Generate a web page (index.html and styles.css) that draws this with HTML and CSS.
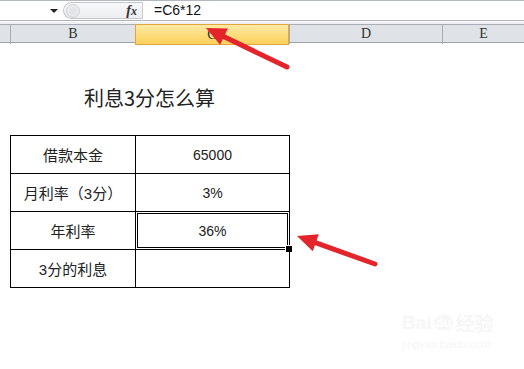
FILE: index.html
```html
<!DOCTYPE html>
<html lang="zh-CN">
<head>
<meta charset="utf-8">
<title>利息3分怎么算</title>
<link rel="stylesheet" href="styles.css">
</head>
<body>
<div class="app">
  <div class="formula-bar">
    <div class="name-box"><span class="dropdown"></span></div>
    <div class="fx-zone">
      <span class="splitter"><span class="dot"></span></span>
      <span class="fx">f<span class="fx-x">x</span></span>
    </div>
    <div class="formula-input">=C6*12</div>
  </div>
  <div class="strip"></div>
  <div class="col-headers">
    <div class="col-h corner"></div>
    <div class="col-h">B</div>
    <div class="col-h active">C</div>
    <div class="col-h">D</div>
    <div class="col-h">E</div>
  </div>
  <div class="sheet">
    <div class="title-wrap"><div class="title">利息3分怎么算</div></div>
    <div class="grid">
      <div class="cell">借款本金</div>
      <div class="cell num">65000</div>
      <div class="cell">月利率（3分）</div>
      <div class="cell num">3%</div>
      <div class="cell">年利率</div>
      <div class="cell num selected">36%<span class="fill-handle"></span></div>
      <div class="cell">3分的利息</div>
      <div class="cell num"></div>
    </div>
    <div class="watermark">
      <div class="wm-logo"><span>Bai</span><span class="wm-du">du</span><span>经验</span></div>
      <div class="wm-url">jingyan.baidu.com</div>
    </div>
  </div>
  <svg class="arrows" width="524" height="369" viewBox="0 0 524 369">
    <line x1="287" y1="67" x2="222" y2="35.8" stroke="#e3242b" stroke-width="5" stroke-linecap="round"/>
    <polygon points="206,28 220.1,44.8 227.9,28.6" fill="#e3242b"/>
    <line x1="375" y1="264" x2="314" y2="242.2" stroke="#e3242b" stroke-width="5" stroke-linecap="round"/>
    <polygon points="297,236 312.8,251.3 318.8,234.3" fill="#e3242b"/>
  </svg>
</div>
</body>
</html>
```

FILE: styles.css
```css
* { box-sizing: border-box; }
html, body { margin: 0; padding: 0; background: #fff; }
body { width: 524px; height: 369px; overflow: hidden; }

.app { position: relative; width: 524px; height: 369px; background: #fff; }

.formula-bar {
  display: flex;
  height: 21px;
  border-top: 1px solid #b4b9c1;
  border-bottom: 1px solid #aeb3bb;
  background: #fff;
}
.name-box {
  width: 63px;
  display: flex;
  align-items: center;
  justify-content: flex-end;
  padding-right: 5px;
}
.dropdown {
  width: 0; height: 0;
  border-left: 4px solid transparent;
  border-right: 4px solid transparent;
  border-top: 4px solid #222;
  margin-top: 1px;
}
.fx-zone {
  width: 80px;
  display: flex;
  align-items: center;
  justify-content: space-between;
  margin: 1px 0;
  background: linear-gradient(#f7f8f9, #eceef1);
  border: 1px solid #c3c7ce;
  border-right: 1px solid #c9ccd2;
  border-radius: 9px 0 0 9px;
  padding: 0 5px 0 2px;
}
.splitter {
  width: 14px; height: 14px;
  border-radius: 50%;
  background: radial-gradient(circle at 50% 45%, #fdfdfd 0, #e8eaed 60%, #d4d7dc 100%);
  border: 1px solid #d0d3d8;
  display: flex; align-items: center; justify-content: center;
}
.dot { width: 8px; height: 8px; border-radius: 50%; background: #e2e4e8; }
.fx {
  font-family: "Liberation Serif", serif;
  font-style: italic;
  font-weight: bold;
  font-size: 14px;
  color: #333;
  line-height: 1;
}
.fx-x { font-size: 12px; }
.formula-input {
  flex: 1;
  padding-left: 11px;
  font-family: "Liberation Sans", sans-serif;
  font-size: 14px;
  line-height: 19px;
  color: #111;
}

.strip {
  height: 3px;
  background: #eef0f3;
  border-top: 1px solid #fff;
}

.col-headers {
  display: grid;
  grid-template-columns: 10px 125px 154px 153px 1fr;
  height: 19px;
  border-top: 1px solid #a9aeb6;
  border-bottom: 1px solid #9da3ab;
  background: #dfe2e7;
}
.col-h {
  border-left: 1px solid #a8adb5;
  font-family: "Liberation Serif", serif;
  font-size: 14px;
  line-height: 17px;
  text-align: center;
  color: #333;
}
.col-h.corner { border-left: none; }
.col-h.active {
  background: linear-gradient(#fdeaa6, #fdd86e 70%, #fbd160);
  border: 1px solid #e2a63b;
  margin-top: -1px;
  margin-bottom: -1px;
  line-height: 19px;
}

.sheet { position: relative; height: 326px; }
.title-wrap { width: 279px; margin-left: 10px; padding-top: 43px; }
.title {
  text-align: center;
  font-family: "Noto Sans CJK SC", sans-serif;
  font-size: 20px;
  line-height: 24px;
  color: #222;
}

.grid {
  display: grid;
  grid-template-columns: 125px 154px;
  grid-auto-rows: 38px;
  width: 280px;
  margin: 25px 0 0 10px;
  border-left: 1px solid #000;
  border-top: 1px solid #000;
}
.cell {
  position: relative;
  border-right: 1px solid #000;
  border-bottom: 1px solid #000;
  display: flex;
  align-items: center;
  justify-content: center;
  font-family: "Liberation Sans", "Noto Sans CJK SC", sans-serif;
  font-size: 15px;
  color: #222;
}
.cell.num { font-size: 14px; }
.cell.selected {
  box-shadow: inset 0 0 0 1px #fff, inset 0 0 0 2px #000;
}
.fill-handle {
  position: absolute;
  right: -4px;
  bottom: -4px;
  width: 6px;
  height: 6px;
  background: #000;
  border: 1px solid #fff;
  box-sizing: content-box;
}

.watermark {
  position: absolute;
  left: 402px;
  top: 266px;
  color: #f6f6f6;
  font-family: "Liberation Sans", "Noto Sans CJK SC", sans-serif;
}
.wm-logo { font-size: 19px; font-weight: bold; display: flex; align-items: center; gap: 2px; }
.wm-du {
  font-size: 13px;
  background: #f7f7f7;
  color: #fff;
  border-radius: 8px;
  padding: 0 2px;
}
.wm-url { font-size: 11px; margin-top: 2px; }

.arrows { position: absolute; left: 0; top: 0; pointer-events: none; }
```
